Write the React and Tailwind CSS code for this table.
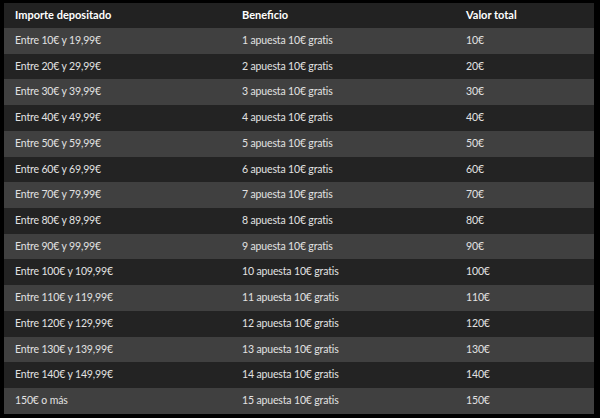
import React from "react";

const rows = [
  ["Entre 10€ y 19,99€", "1 apuesta 10€ gratis", "10€"],
  ["Entre 20€ y 29,99€", "2 apuesta 10€ gratis", "20€"],
  ["Entre 30€ y 39,99€", "3 apuesta 10€ gratis", "30€"],
  ["Entre 40€ y 49,99€", "4 apuesta 10€ gratis", "40€"],
  ["Entre 50€ y 59,99€", "5 apuesta 10€ gratis", "50€"],
  ["Entre 60€ y 69,99€", "6 apuesta 10€ gratis", "60€"],
  ["Entre 70€ y 79,99€", "7 apuesta 10€ gratis", "70€"],
  ["Entre 80€ y 89,99€", "8 apuesta 10€ gratis", "80€"],
  ["Entre 90€ y 99,99€", "9 apuesta 10€ gratis", "90€"],
  ["Entre 100€ y 109,99€", "10 apuesta 10€ gratis", "100€"],
  ["Entre 110€ y 119,99€", "11 apuesta 10€ gratis", "110€"],
  ["Entre 120€ y 129,99€", "12 apuesta 10€ gratis", "120€"],
  ["Entre 130€ y 139,99€", "13 apuesta 10€ gratis", "130€"],
  ["Entre 140€ y 149,99€", "14 apuesta 10€ gratis", "140€"],
  ["150€ o más", "15 apuesta 10€ gratis", "150€"],
];

export default function App() {
  return (
    <div className="w-[600px] h-[418px] bg-black pt-[3px] pl-[4px] pr-[6px] font-['Lato',sans-serif] text-[10.5px] tracking-[-0.15px] text-[#e2e2e2]">
      <div className="flex flex-col">
        {/* Header */}
        <div className="flex h-[25px] items-center bg-[#222222] font-bold text-[11px] tracking-normal text-white">
          <div className="w-[227px] pl-[11px]">Importe depositado</div>
          <div className="w-[224px] pl-[11px]">Beneficio</div>
          <div className="flex-1 pl-[11px]">Valor total</div>
        </div>

        {rows.map((r, i) => (
          <div
            key={i}
            className={`flex h-[25.73px] items-center ${i % 2 === 0 ? "bg-[#404040]" : "bg-[#232323]"}`}
          >
            <div className="w-[227px] pl-[11px]">{r[0]}</div>
            <div className="w-[224px] pl-[11px]">{r[1]}</div>
            <div className="flex-1 pl-[11px]">{r[2]}</div>
          </div>
        ))}
      </div>
    </div>
  );
}
